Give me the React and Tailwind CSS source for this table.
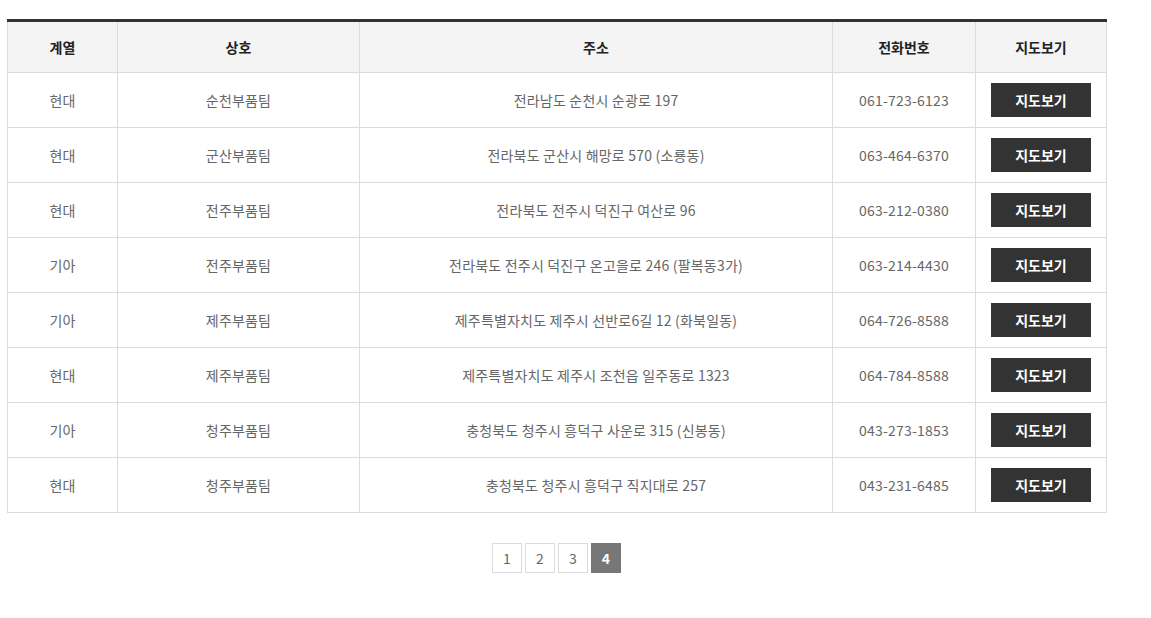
import React from "react";

const rows = [
  ["현대", "순천부품팀", "전라남도 순천시 순광로 197", "061-723-6123"],
  ["현대", "군산부품팀", "전라북도 군산시 해망로 570 (소룡동)", "063-464-6370"],
  ["현대", "전주부품팀", "전라북도 전주시 덕진구 여산로 96", "063-212-0380"],
  ["기아", "전주부품팀", "전라북도 전주시 덕진구 온고을로 246 (팔복동3가)", "063-214-4430"],
  ["기아", "제주부품팀", "제주특별자치도 제주시 선반로6길 12 (화북일동)", "064-726-8588"],
  ["현대", "제주부품팀", "제주특별자치도 제주시 조천읍 일주동로 1323", "064-784-8588"],
  ["기아", "청주부품팀", "충청북도 청주시 흥덕구 사운로 315 (신봉동)", "043-273-1853"],
  ["현대", "청주부품팀", "충청북도 청주시 흥덕구 직지대로 257", "043-231-6485"],
];

export default function App() {
  return (
    <div
      className="bg-white w-[1151px] h-[618px] pt-[19px] pl-[7px]"
      style={{ fontFamily: '"Noto Sans CJK KR", "Noto Sans", sans-serif' }}
    >
      <div className="w-[1099px]">
        <table className="w-[1099px] table-fixed border-collapse border-t-[3px] border-t-[#333] text-[14px]">
          <colgroup>
            <col className="w-[110px]" />
            <col className="w-[242px]" />
            <col className="w-[473px]" />
            <col className="w-[143px]" />
            <col className="w-[131px]" />
          </colgroup>
          <thead>
            <tr className="h-[52px] bg-[#f4f4f4]">
              {["계열", "상호", "주소", "전화번호", "지도보기"].map((h) => (
                <th key={h} className="border border-[#dcdcdc] border-t-0 font-bold text-[#222] text-center p-0">
                  {h}
                </th>
              ))}
            </tr>
          </thead>
          <tbody>
            {rows.map((r, i) => (
              <tr key={i} className="h-[55px]">
                {r.map((c, j) => (
                  <td key={j} className="border border-[#dcdcdc] text-[#666] text-center p-0 tracking-[0.2px]">
                    {c}
                  </td>
                ))}
                <td className="border border-[#dcdcdc] text-center p-0">
                  <button className="w-[100px] h-[34px] bg-[#333] text-white font-bold text-[14px] align-middle">
                    지도보기
                  </button>
                </td>
              </tr>
            ))}
          </tbody>
        </table>
        <div className="flex justify-center gap-[3px] mt-[30px]">
          {["1", "2", "3"].map((n) => (
            <div key={n} className="w-[30px] h-[30px] border border-[#dcdcdc] flex items-center justify-center text-[14px] text-[#666]">
              {n}
            </div>
          ))}
          <div className="w-[30px] h-[30px] bg-[#777] flex items-center justify-center text-[14px] text-white font-bold">
            4
          </div>
        </div>
      </div>
    </div>
  );
}
